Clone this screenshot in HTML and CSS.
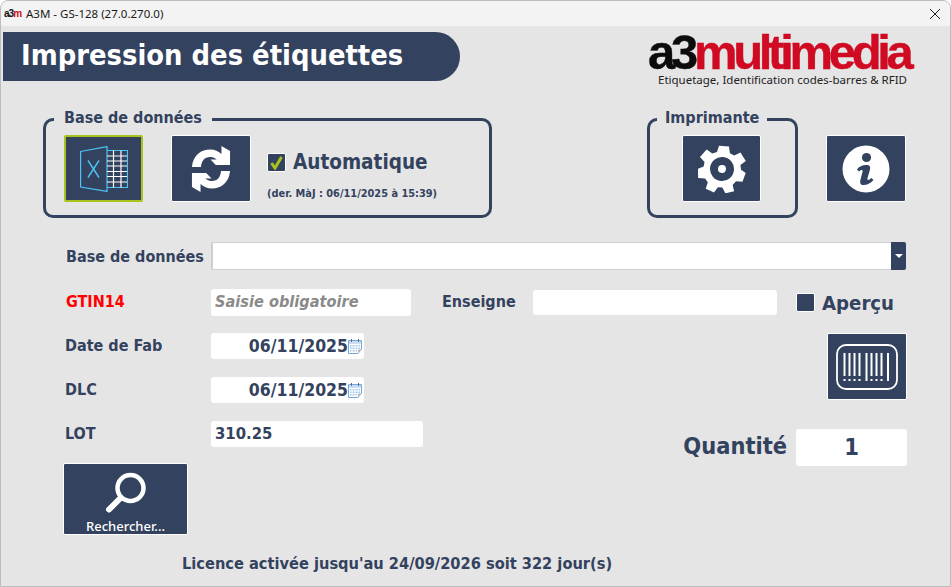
FILE: index.html
```html
<!DOCTYPE html>
<html lang="fr">
<head>
<meta charset="utf-8">
<title>A3M - GS-128</title>
<link rel="stylesheet" href="styles.css">
</head>
<body>
<div class="window">
  <header class="titlebar">
    <span class="app-logo">a3<span class="red">m</span></span>
    <span class="app-title">A3M - GS-128 (27.0.270.0)</span>
    <svg class="close" width="12" height="12" viewBox="0 0 12 12"><path d="M1 1l10 10M11 1L1 11" stroke="#222" stroke-width="1" fill="none"/></svg>
  </header>

  <div class="top">
    <h1 class="banner">Impression des étiquettes</h1>
    <div class="brand">
      <div class="brand-name">a3<span class="red">multimedia</span></div>
      <div class="brand-tag">Etiquetage, Identification codes-barres &amp; RFID</div>
    </div>
  </div>

  <div class="groups">
    <fieldset class="group group-db">
      <legend>Base de données</legend>
      <button class="tile tile-active" type="button" aria-label="Excel">
        <svg width="48" height="46" viewBox="0 0 48 46" fill="none" stroke="#4cc3f2" stroke-width="1.200">
          <path d="M.6 5.500L27 .6V45.400L.6 41Z"/>
          <path d="M27 4.500H47.500V41.500H27"/>
          <path d="M27 10h20M27 15h20M27 20h20M27 25.500h20M27 30.500h20M27 36h20" stroke="#fff"/>
          <path d="M33.500 4.500V41.500M41 4.500V41.500" stroke="#fff"/>
          <path d="M8 14.500L19 31.500M19 14.500L8 31.500" stroke-width="1.400"/>
        </svg>
      </button>
      <button class="tile tile-wide" type="button" aria-label="Actualiser">
        <svg width="40" height="48" viewBox="0 0 42 48" preserveAspectRatio="none" fill="#fff">
          <path d="M1 22C2 10 11 4.500 20 4.500C25 4.500 29 6.500 32 9V1L41 6V20H26L20.500 14.500H27C24.500 12.500 22 12 20 12C14 12 11 16 10.500 22Z"/>
          <path d="M41 26C40 38 31 43.500 22 43.500C17 43.500 13 41.500 10 39V47L1 42V28H16L21.500 33.500H15C17.500 35.500 20 36 22 36C28 36 31 32 31.500 26Z"/>
        </svg>
      </button>
      <div class="auto">
        <label class="auto-line">
          <span class="check">
            <svg width="15" height="15" viewBox="0 0 15 15"><path d="M2.500 8L6 13L12.500 2" fill="none" stroke="#a6c41c" stroke-width="3"/></svg>
          </span>
          <span class="auto-text">Automatique</span>
        </label>
        <div class="auto-date">(der. MàJ : 06/11/2025 à 15:39)</div>
      </div>
    </fieldset>

    <fieldset class="group group-printer">
      <legend>Imprimante</legend>
      <button class="tile" type="button" aria-label="Réglages">
        <svg width="48" height="48" viewBox="-24 -24 48 48">
          <path fill="#fff" fill-rule="evenodd" d="M-5-23L5-23 6.500-16.500 11-14.500 17-18 23-10 18-5.500 19-1 24 2 21.500 11 15 11 12 15 14 21 5.500 24 2 18.500H-2.500L-6 24-14.500 21-13 14.500-16 11-23 11-24 2-18.500-1-18-5.500-23-10-17-18-11-14.500-6.500-16.500ZM0-12A12 12 0 1 0 0 12A12 12 0 1 0 0-12ZM0-4A4 4 0 1 1 0 4A4 4 0 1 1 0-4Z" transform="rotate(5)"/>
        </svg>
      </button>
    </fieldset>

    <button class="tile tile-info" type="button" aria-label="Informations">
      <svg width="48" height="48" viewBox="0 0 48 48">
        <circle cx="24" cy="24" r="23.500" fill="#fff"/>
        <circle cx="24.500" cy="12.500" r="4.600" fill="#33425e"/>
        <path fill="#33425e" d="M15 24.500C17 21 21.500 19.500 25.500 20C28 20.300 28.500 22 28 24.500L25.500 33C25 35.500 26.500 35.500 29.500 33L31.500 35C28.500 38.500 25 40 21.500 40C18.500 40 17.500 38 18.500 34.500L20.500 27C21 24.500 19.500 24.500 17 26.500Z"/>
      </svg>
    </button>
  </div>

  <main class="form">
    <label class="label label-db" for="base">Base de données</label>
    <div class="select">
      <span class="select-value" id="base"></span>
      <span class="select-btn"><span class="arrow"></span></span>
    </div>

    <label class="label label-red row-2">GTIN14</label>
    <div class="input input-gtin placeholder row-2">Saisie obligatoire</div>
    <label class="label label-ens">Enseigne</label>
    <div class="input input-ens"></div>
    <label class="apercu">
      <span class="check"></span>
      <span class="apercu-text">Aperçu</span>
    </label>

    <label class="label label-left row-3">Date de Fab</label>
    <div class="input input-date row-3">06/11/2025
      <svg class="cal" width="14" height="16" viewBox="0 0 14 16"><path d="M.5 2.500H13.500V11L10 15.500H.5Z" fill="#fff" stroke="#6fa8dc"/><path d="M1 3h12v3H1z" fill="#c9dcf0"/><path d="M2 7h10v1.500H2zM2 9.500h10V11H2zM2 12h7v1.500H2z" fill="#a9c8ea"/><path d="M4 6.500v7.500M7 6.500v7.500M10 6.500v5" stroke="#fff"/><path d="M3.500 1v3M10.500 1v3" stroke="#667"/><path d="M10 15.500V11.500H13.500Z" fill="#bbb"/></svg>
    </div>
    <button class="tile tile-barcode" type="button" aria-label="Imprimer">
      <svg width="62" height="46" viewBox="0 0 62 46" fill="none" stroke="#fff">
        <rect x="1" y="1" width="60" height="44" rx="9" stroke-width="1.800"/>
        <path stroke-width="2" d="M8.500 9V32M13.500 9V32M18.500 9V32M23.500 9V32M30.500 9V37M35.500 9V32M40.500 9V32M45.500 9V32M52 9V37"/>
        <path stroke-width="2" d="M8.500 35V37M13.500 35V37M18.500 35V37M23.500 35V37M35.500 35V37M40.500 35V37M45.500 35V37"/>
      </svg>
    </button>

    <label class="label label-left row-4">DLC</label>
    <div class="input input-date row-4">06/11/2025
      <svg class="cal" width="14" height="16" viewBox="0 0 14 16"><path d="M.5 2.500H13.500V11L10 15.500H.5Z" fill="#fff" stroke="#6fa8dc"/><path d="M1 3h12v3H1z" fill="#c9dcf0"/><path d="M2 7h10v1.500H2zM2 9.500h10V11H2zM2 12h7v1.500H2z" fill="#a9c8ea"/><path d="M4 6.500v7.500M7 6.500v7.500M10 6.500v5" stroke="#fff"/><path d="M3.500 1v3M10.500 1v3" stroke="#667"/><path d="M10 15.500V11.500H13.500Z" fill="#bbb"/></svg>
    </div>

    <label class="label label-left row-5">LOT</label>
    <div class="input input-lot row-5">310.25</div>
    <div class="qty">
      <span class="qty-label">Quantité</span>
      <div class="qty-value">1</div>
    </div>

    <button class="tile tile-search" type="button">
      <svg width="42" height="42" viewBox="0 0 42 42" fill="none" stroke="#fff">
        <circle cx="25.500" cy="16" r="13" stroke-width="4.500"/>
        <path d="M15.500 26L4 37.500" stroke-width="6" stroke-linecap="round"/>
      </svg>
      <span>Rechercher...</span>
    </button>
  </main>

  <footer class="licence">Licence activée jusqu'au 24/09/2026 soit 322 jour(s)</footer>
</div>
</body>
</html>
```

FILE: styles.css
```css
* { box-sizing: border-box; }
html, body { margin: 0; padding: 0; }
body { width: 951px; height: 587px; overflow: hidden; background: #fff; font-family: "DejaVu Sans Condensed", "DejaVu Sans", sans-serif; font-stretch: condensed; color: #33425e; }
.red { color: #cf0a22; }
.window { width: 951px; height: 587px; background: #e5e5e5; border: 1px solid #bdbdbd; border-radius: 8px 8px 0 0; overflow: hidden; display: flex; flex-direction: column; }

.titlebar { flex: none; height: 25px; background: #f3f3f3; display: flex; align-items: center; padding: 0 9px 0 3px; font-family: "Noto Sans", sans-serif; font-stretch: normal; font-size: 12px; color: #1a1a1a; }
.app-logo { width: 22px; font: bold 10px "Liberation Sans", sans-serif; letter-spacing: -1px; color: #111; }
.app-title { flex: 1; font-size: 11.500px; }

.top { flex: none; display: flex; justify-content: space-between; padding: 6px 36px 0 2px; height: 84px; }
.banner { margin: 0; width: 457px; height: 49px; background: #33425e; border-radius: 0 25px 25px 0; color: #fff; font-size: 28.800px; line-height: 46px; font-weight: bold; padding-left: 18px; white-space: nowrap; }
.brand { width: 266px; }
.brand-name { font: bold 49px/40px "Liberation Sans", sans-serif; letter-spacing: -4.300px; color: #0c0c0c; white-space: nowrap; height: 40px; -webkit-text-stroke: .4px currentColor; }
.brand-tag { font: 11.500px/15px "Noto Sans", sans-serif; color: #222; white-space: nowrap; padding-left: 10px; }

.groups { flex: none; display: flex; align-items: flex-start; padding-left: 42px; height: 108px; }
.group { margin: 0; padding: 7px 0 0 18px; border: 3px solid #33425e; border-radius: 10px; display: flex; align-items: flex-start; height: 108px; }
.group legend { padding: 0 10px 2px; margin-left: -10px; font-size: 16px; line-height: 16px; font-weight: bold; white-space: nowrap; }
.group-db { width: 449px; gap: 28px; }
.group-printer { width: 151px; margin-left: 155px; padding-left: 32px; }
.group-printer legend { padding: 0 8px 2px; margin-left: -25px; }

.tile { flex: none; width: 79px; height: 67px; padding: 0; border: 1px solid #fff; border-radius: 2px; background: #33425e; display: flex; align-items: center; justify-content: center; }
.tile-wide { width: 80px; }
.tile-active { border: 2px solid #a6c41c; }
.tile-info { width: 80px; margin: 25px 0 0 28px; }
.tile-barcode { grid-column: 5; grid-row: 3 / span 2; align-self: start; justify-self: end; width: 80px; }
.tile-search { grid-column: 1 / span 2; grid-row: 6; align-self: start; width: 125px; height: 72px; flex-direction: column; justify-content: flex-start; margin: -2px 0 0 -3px; color: #fff; font: 500 13px "Noto Sans", sans-serif; padding-top: 8px; }
.tile-search span { line-height: 14px; margin-top: 5px; }

.auto { margin-top: 15px; margin-left: -12px; }
.auto-line { display: flex; align-items: center; gap: 7px; }
.check { flex: none; width: 19px; height: 19px; background: #33425e; border: 1px solid #fff; border-radius: 2px; display: flex; align-items: center; justify-content: center; }
.auto-text { font-size: 20.500px; line-height: 24px; font-weight: bold; }
.auto-date { font-size: 10.900px; font-weight: bold; margin-top: 13px; }

.form { flex: none; display: grid; grid-template-columns: 145px 231px 91px 263px 111px; grid-template-rows: 29px 26px 26px 26px 26px 72px; row-gap: 18px; align-items: center; padding-left: 65px; margin-top: 24px; }
.label { grid-column: 1; font-size: 16px; font-weight: bold; white-space: nowrap; line-height: 18px; margin-top: -1px; }
.label-db { grid-row: 1; margin: 0; }
.label-left { margin-left: -1px; }
.label-red { color: #f00; }
.label-ens { grid-column: 3; grid-row: 2; }
.row-2 { grid-row: 2; }
.row-3 { grid-row: 3; }
.row-4 { grid-row: 4; }
.row-5 { grid-row: 5; }

.select { grid-column: 2 / span 4; grid-row: 1; align-self: start; display: flex; height: 28px; width: 695px; background: #fff; border: 1px solid #cfcfcf; border-left-width: 2px; border-radius: 2px; }
.select-value { flex: 1; }
.select-btn { flex: none; width: 15px; margin: -1px -1px -1px 0; background: #33425e; border-radius: 0 2px 2px 0; display: flex; align-items: center; justify-content: center; }
.arrow { width: 0; height: 0; border: 4px solid transparent; border-top: 4px solid #fff; border-bottom: 0; }

.input { grid-column: 2; height: 26px; background: #fff; border-radius: 3px; font-size: 16.500px; font-weight: bold; line-height: 26px; white-space: nowrap; }
.input-gtin { width: 200px; height: 27px; }
.placeholder { font-size: 16.200px; font-style: italic; color: #8a8a8a; padding-left: 4px; }
.input-ens { grid-column: 4; grid-row: 2; width: 244px; height: 25px; }
.input-date { width: 153px; display: flex; justify-content: flex-end; align-items: center; padding-right: 2px; font-size: 17.500px; }
.cal { flex: none; }
.input-lot { width: 212px; padding-left: 4px; }
.apercu { grid-column: 5; grid-row: 2; display: flex; align-items: center; gap: 7px; }
.apercu-text { font-size: 20.200px; font-weight: bold; line-height: 24px; margin-top: 1px; }

.qty { grid-column: 3 / span 3; grid-row: 5 / span 2; align-self: start; justify-self: end; display: flex; align-items: center; gap: 9px; margin-top: 8px; }
.qty-label { font-size: 23.400px; font-weight: bold; margin-top: -4px; }
.qty-value { width: 111px; height: 37px; background: #fff; border-radius: 3px; text-align: center; font-size: 23.500px; font-weight: bold; line-height: 37px; }

.licence { flex: none; padding-left: 181px; margin-top: 17px; font-size: 16.250px; font-weight: bold; line-height: 20px; }
```
